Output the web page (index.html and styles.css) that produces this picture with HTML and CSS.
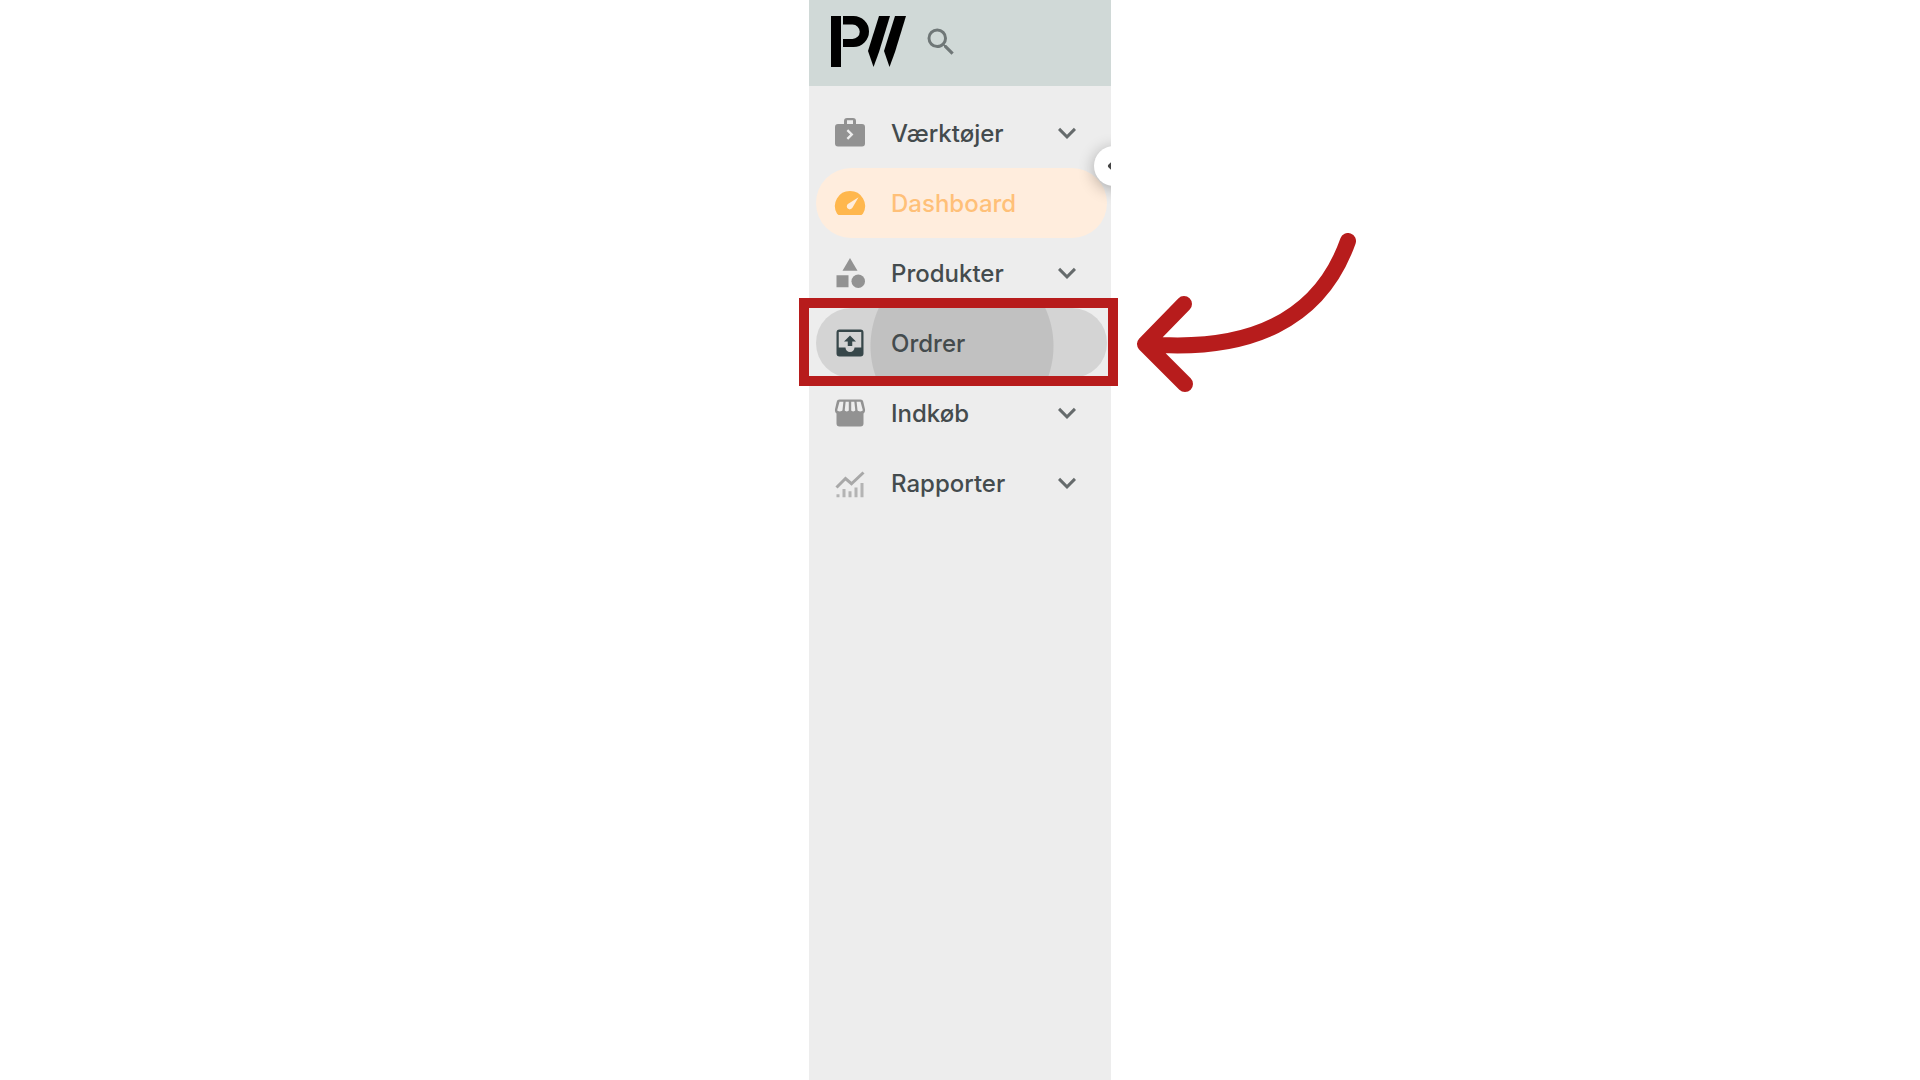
FILE: index.html
```
<!DOCTYPE html>
<html lang="da">
<head>
    <meta charset="UTF-8">
    <meta name="viewport" content="width=device-width, initial-scale=1.0">
    <title>Ordrer</title>
    <link rel="stylesheet" href="styles.css">
</head>
<body>
    <aside class="sidebar">
        <header class="top">
            <svg class="logo" viewBox="0 0 76 51" role="img" aria-label="PW">
                <path d="M1 0h10v51H1z"/>
                <path d="M13 0h10.500a15.500 15.500 0 0 1 0 31H13v-8h9.500a7.200 7.200 0 0 0 0-14.500H13z"/>
                <path d="M49 0h11L49 36l-5.500 15L38 35z"/>
                <path d="M65 0h11L65 36l-5.500 15L54 35z"/>
            </svg>
            <button type="button" class="search" aria-label="Søg">
                <svg class="icon" viewBox="0 0 24 24"><path d="M15.500 14h-.79l-.28-.27A6.470 6.470 0 0 0 16 9.500 6.500 6.500 0 1 0 9.500 16c1.610 0 3.090-.59 4.230-1.570l.27.28v.79l5 4.990L20.490 19l-4.990-5zm-6 0C7.010 14 5 11.990 5 9.500S7.010 5 9.500 5 14 7.010 14 9.500 11.990 14 9.500 14z"/></svg>
            </button>
        </header>
        <nav class="menu">
            <button type="button" class="item">
                <svg class="icon" viewBox="0 0 24 24"><path fill-rule="evenodd" d="M10 2h4a2 2 0 0 1 2 2v2h4a2 2 0 0 1 2 2v11a2 2 0 0 1-2 2H4a2 2 0 0 1-2-2V8a2 2 0 0 1 2-2h4V4a2 2 0 0 1 2-2zm4 4V3.500h-4V6zm-3.200 10.500l3.500-3.500-3.500-3.500-1.100 1.100 2.400 2.400-2.400 2.400z"/></svg>
                <span class="label">Værktøjer</span>
                <svg class="chevron" viewBox="0 0 24 24"><path d="M7.410 8.580L12 13.170l4.590-4.590L18 10l-6 6-6-6z"/></svg>
            </button>
            <a href="#" class="item active">
                <svg class="icon" viewBox="0 0 24 24"><path fill-rule="evenodd" d="M12 4a10 10 0 0 0-8.700 15c.3.600.900 1 1.600 1h14.200c.7 0 1.300-.4 1.600-1A10 10 0 0 0 12 4zm5.700 4.100l-4.200 7.300a2 2 0 1 1-2.900-2.700z"/></svg>
                <span class="label">Dashboard</span>
            </a>
            <button type="button" class="item">
                <svg class="icon" viewBox="0 0 24 24"><path d="M12 2l-5 8.500h10zM3 13.500h8v8H3z"/><circle cx="17.500" cy="17.500" r="4.500"/></svg>
                <span class="label">Produkter</span>
                <svg class="chevron" viewBox="0 0 24 24"><path d="M7.410 8.580L12 13.170l4.590-4.590L18 10l-6 6-6-6z"/></svg>
            </button>
            <div class="marked">
                <a href="#" class="item pressed">
                    <svg class="icon" viewBox="0 0 24 24"><path fill-rule="evenodd" d="M5 3h14a2 2 0 0 1 2 2v14a2 2 0 0 1-2 2H5a2 2 0 0 1-2-2V5a2 2 0 0 1 2-2zm-.5 1.700V15H9a3 3 0 0 0 6 0h4.500V4.700zM8 11l4-4 4 4h-2.500v3h-3v-3z"/></svg>
                    <span class="label">Ordrer</span>
                </a>
                <div class="frame"></div>
                <svg class="arrow" viewBox="0 0 220 160">
                    <path d="M211 8C183 87 113 120 8 111M47 71L8 111l40 40"/>
                </svg>
            </div>
            <button type="button" class="item">
                <svg class="icon" viewBox="0 0 24 24"><path fill-rule="evenodd" d="M5 3h14c1 0 1.600.5 1.800 1.400L22 9.500c.2 1.200-.2 2.200-1 2.900V19a2 2 0 0 1-2 2H5a2 2 0 0 1-2-2v-6.600c-.8-.7-1.200-1.700-1-2.900l1.200-5.100C3.400 3.500 4 3 5 3zm0 1.500L3.500 10c0 1.300 3.300 1.300 3.500 0l.6-5.500zm4.100 0L8.500 10c0 1.300 2.700 1.300 2.700 0V4.500zm3.700 0V10c0 1.300 2.700 1.300 2.700 0l-.6-5.500zm3.600 0L17 10c.2 1.300 3.500 1.300 3.500 0L19 4.500z"/></svg>
                <span class="label">Indkøb</span>
                <svg class="chevron" viewBox="0 0 24 24"><path d="M7.410 8.580L12 13.170l4.590-4.590L18 10l-6 6-6-6z"/></svg>
            </button>
            <button type="button" class="item">
                <svg class="icon light" viewBox="0 0 24 24"><path d="M3 19.500h2v2H3zM7 16h2v5.500H7zM11 17.500h2v4h-2zM15 15h2v6.500h-2zM19 12h2v9.500h-2z"/><path class="line" d="M3 15l6-6 4 3.500L21 5"/></svg>
                <span class="label">Rapporter</span>
                <svg class="chevron" viewBox="0 0 24 24"><path d="M7.410 8.580L12 13.170l4.590-4.590L18 10l-6 6-6-6z"/></svg>
            </button>
        </nav>
        <div class="edge">
            <button type="button" class="collapse" aria-label="Skjul menu">
                <svg viewBox="0 0 24 24"><path d="M14 6l-6 6 6 6"/></svg>
            </button>
        </div>
    </aside>
</body>
</html>
```
FILE: styles.css
```
body{
    margin: 0;
    background-color: #fff;
    font-family: Inter, "Liberation Sans", sans-serif;
}
.sidebar{
    position: relative;
    width: 302px;
    min-height: 100vh;
    margin: 0 auto;
    background-color: #ededed;
}
.top{
    display: flex;
    align-items: center;
    gap: 17px;
    padding: 16px 21px 19px;
    background-color: #d0d9d7;
}
.logo{
    width: 76px;
    height: 51px;
}
.search{
    display: flex;
    padding: 0;
    border: none;
    background: none;
}
.icon{
    width: 36px;
    height: 36px;
    fill: #929292;
}
.search .icon{
    fill: #6f7777;
}
.menu{
    padding: 12px 4px 12px 7px;
}
.item{
    display: flex;
    align-items: center;
    gap: 23px;
    box-sizing: border-box;
    width: 100%;
    height: 70px;
    padding: 0 22px 0 16px;
    border: none;
    border-radius: 35px;
    background: none;
    color: #444b4d;
    font-family: inherit;
    font-size: 24px;
    font-weight: 500;
    text-align: left;
    text-decoration: none;
}
.label{
    flex: 1;
}
.chevron{
    width: 36px;
    height: 36px;
    fill: #666b6c;
}
.active{
    background-color: #ffeddd;
    color: #ffc078;
}
.active .icon{
    fill: #ffb74d;
}
.pressed{
    background: radial-gradient(circle at 146px 38px, #c1c1c1 91px, #d4d4d4 92px);
}
.pressed .icon{
    fill: #37474a;
}
.light{
    fill: #b4b4b4;
}
.line{
    fill: none;
    stroke: #a8a8a8;
    stroke-width: 2;
}

/* red marking round the menu item */
.marked{
    position: relative;
}
.frame{
    position: absolute;
    top: -10px;
    left: -17px;
    right: -11px;
    bottom: -8px;
    border: 10px solid #b71c1c;
    z-index: 2;
}
.arrow{
    position: absolute;
    top: -75px;
    left: 321px;
    width: 220px;
    height: 160px;
    fill: none;
    stroke: #b71c1c;
    stroke-width: 16;
    stroke-linecap: round;
    stroke-linejoin: round;
}

/* collapse button, cut off by the sidebar edge */
.edge{
    position: absolute;
    top: 126px;
    right: 0;
    width: 60px;
    height: 80px;
    overflow: hidden;
}
.collapse{
    position: absolute;
    top: 20px;
    left: 43px;
    width: 40px;
    height: 40px;
    padding: 8px;
    border: none;
    border-radius: 50%;
    background-color: #fff;
    box-shadow: 0 3px 16px rgba(0, 0, 0, 0.3);
}
.collapse svg{
    display: block;
    width: 24px;
    height: 24px;
    fill: none;
    stroke: #444;
    stroke-width: 4;
    stroke-linejoin: round;
}
```
